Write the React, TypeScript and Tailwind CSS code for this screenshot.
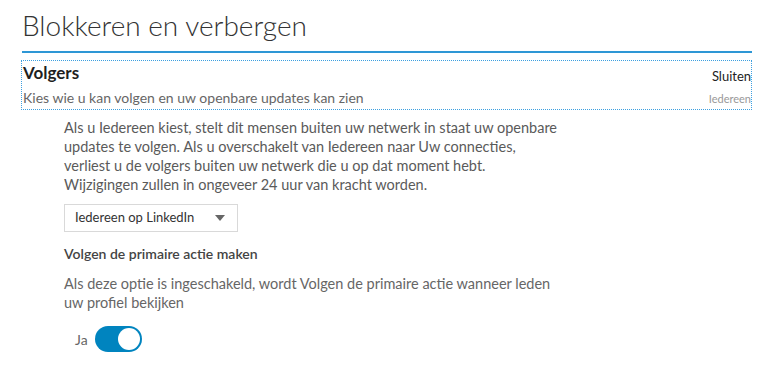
export default function App() {
  return (
    <div
      className="w-[770px] h-[367px] bg-white overflow-hidden"
      style={{ fontFamily: "Lato, 'Open Sans', sans-serif" }}
    >
      <div className="pl-[22px] pr-[18px] pt-[5px]">
        <h1 className="text-[28px] font-light text-[#333] leading-[40px]">
          Blokkeren en verbergen
        </h1>
        <div className="mt-[6px] h-[2px] bg-[#2e97d5]"></div>
        <div className="mt-[7px] -ml-px border border-dotted border-[#3da0e0] pl-px">
          <div className="flex justify-between items-end">
            <h2 className="text-[17px] font-bold text-[#1f1f1f] leading-[24px]">Volgers</h2>
            <span className="text-[13px] text-[#222] leading-[18px]">Sluiten</span>
          </div>
          <div className="flex justify-between items-end mt-[3px] pb-[1px]">
            <p className="text-[14px] text-[#666] leading-[20px]">
              Kies wie u kan volgen en uw openbare updates kan zien
            </p>
            <span className="text-[11px] text-[#999] leading-[18px]">Iedereen</span>
          </div>
        </div>
        <div className="pl-[42px] pt-[8px] w-[560px]">
          <p className="text-[14.5px] text-[#5a5a5a] leading-[19px]">
            Als u Iedereen kiest, stelt dit mensen buiten uw netwerk in staat uw openbare
            <br />
            updates te volgen. Als u overschakelt van Iedereen naar Uw connecties,
            <br />
            verliest u de volgers buiten uw netwerk die u op dat moment hebt.
            <br />
            Wijzigingen zullen in ongeveer 24 uur van kracht worden.
          </p>
          <div className="mt-[10px] w-[174px] h-[28px] border border-[#d9d9d9] flex items-center justify-between pl-[10px] pr-[12px]">
            <span className="text-[13px] text-[#333]">Iedereen op LinkedIn</span>
            <svg width="10" height="6" viewBox="0 0 10 6">
              <path d="M0 0h10L5 6z" fill="#666" />
            </svg>
          </div>
          <h3 className="mt-[12px] text-[14px] font-semibold text-[#444] leading-[20px]">
            Volgen de primaire actie maken
          </h3>
          <p className="mt-[10px] text-[14.5px] text-[#666] leading-[19px]">
            Als deze optie is ingeschakeld, wordt Volgen de primaire actie wanneer leden
            <br />
            uw profiel bekijken
          </p>
          <div className="mt-[14px] flex items-center gap-[7px] pl-[11px]">
            <span className="text-[14px] text-[#666]">Ja</span>
            <div className="w-[47px] h-[26px] rounded-full bg-[#0084bf] flex items-center justify-end pr-[2px]">
              <div className="w-[22px] h-[22px] rounded-full bg-white"></div>
            </div>
          </div>
        </div>
      </div>
    </div>
  );
}
